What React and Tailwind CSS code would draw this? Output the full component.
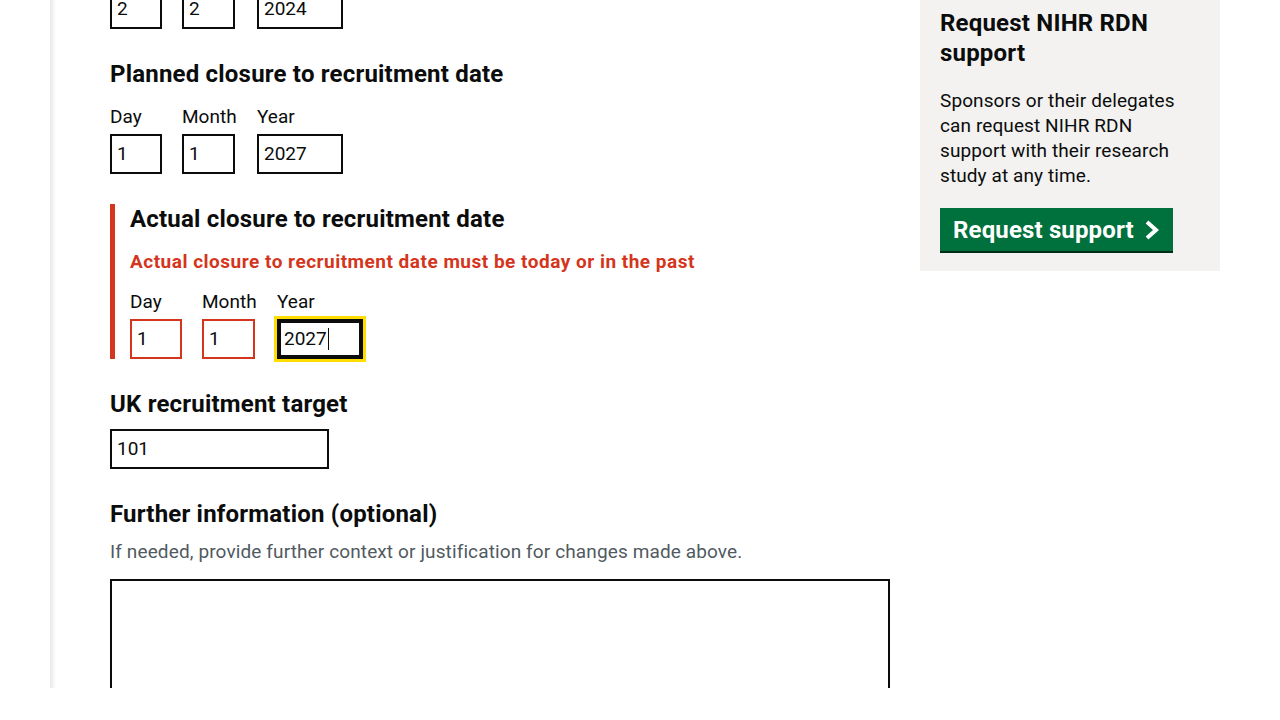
import React from 'react';

function Box({ value, w, error, focused }) {
  // date / text field, drawn as a box so the caret shows
  const border = error ? 'border-[#d4351c]' : 'border-[#0b0c0c]';
  return (
    <div
      className={`h-10 shrink-0 border-2 ${border} bg-white px-[5px] flex items-center text-[19px] text-[#0b0c0c] ${
        focused ? 'outline-solid outline-[3px] outline-[#ffdd00] shadow-[inset_0_0_0_2px_#0b0c0c]' : ''
      }`}
      style={{ width: w }}
    >
      <span>{value}</span>
      {focused && <span className="w-px h-[22px] bg-[#0b0c0c] ml-px" />}
    </div>
  );
}

function DateFields({ values, error, focusYear, noLabels }) {
  const cols = [
    { label: 'Day', col: 'w-[52px]', w: 52, err: error },
    { label: 'Month', col: 'w-[55px]', w: 53, err: error },
    { label: 'Year', col: 'w-[86px]', w: 86, err: false },
  ];
  return (
    <div className="flex gap-5">
      {cols.map((c, i) => (
        <div key={c.label} className={`flex flex-col ${c.col}`}>
          {!noLabels && <span className="text-[19px] leading-[25px] mb-[5px]">{c.label}</span>}
          <Box value={values[i]} w={c.w} error={c.err} focused={focusYear && i === 2} />
        </div>
      ))}
    </div>
  );
}

export default function App() {
  return (
    <div className="h-[720px] bg-white overflow-hidden text-[#0b0c0c] font-['Roboto','Liberation_Sans',sans-serif]">
      <div className="h-[688px] flex overflow-hidden">
        <div className="w-[50px] shrink-0" />
        <div className="w-[6px] shrink-0 bg-gradient-to-r from-[#e8e8e8] to-white" />
        <div className="flex items-start gap-[30px] pl-[54px] -mt-3">
          {/* Form column */}
          <div className="w-[780px] shrink-0 mt-px">
            <DateFields values={['2', '2', '2024']} noLabels />

            <h2 className="mt-[30px] text-[24px] leading-[30px] font-bold tracking-[0.2px] mb-[15px]">
              Planned closure to recruitment date
            </h2>
            <DateFields values={['1', '1', '2027']} />

            {/* Error group */}
            <div className="mt-[30px] border-l-[5px] border-[#d4351c] pl-[15px]">
              <h2 className="text-[24px] leading-[30px] font-bold tracking-[0.2px] mb-[15px]">
                Actual closure to recruitment date
              </h2>
              <p className="text-[19px] leading-[25px] font-bold tracking-[0.5px] text-[#d4351c] mb-[15px]">
                Actual closure to recruitment date must be today or in the past
              </p>
              <DateFields values={['1', '1', '2027']} error focusYear />
            </div>

            <h2 className="mt-[30px] text-[24px] leading-[30px] font-bold tracking-[0.2px] mb-[10px]">
              UK recruitment target
            </h2>
            <Box value="101" w={219} />

            <h2 className="mt-[30px] text-[24px] leading-[30px] font-bold tracking-[0.2px] mb-[10px]">
              Further information (optional)
            </h2>
            <p className="text-[19px] leading-[25px] tracking-[0.12px] text-[#505a5f] mb-[15px]">
              If needed, provide further context or justification for changes made above.
            </p>
            <div className="w-[780px] h-[160px] border-2 border-[#0b0c0c]" />
          </div>

          {/* Sidebar */}
          <div className="w-[300px] shrink-0 bg-[#f3f2f1] pt-5 px-5 pb-[18px]">
            <h2 className="text-[24px] leading-[30px] font-bold tracking-[0.2px]">Request NIHR RDN support</h2>
            <p className="mt-5 text-[19px] leading-[25px] tracking-[0.1px]">
              Sponsors or their delegates can request NIHR RDN support with their research study at any time.
            </p>
            <button className="mt-5 h-[43px] w-[233px] bg-[#00703c] shadow-[0_2px_0_#002d18] text-white text-[24px] font-bold tracking-[0.15px] flex items-center pl-[13px] mb-[2px]">
              <span>Request support</span>
              <svg width="18" height="20" viewBox="0 0 18 20" className="ml-auto mr-3">
                <path d="M4 2 L13 10 L4 18" fill="none" stroke="white" strokeWidth="4" />
              </svg>
            </button>
          </div>
        </div>
      </div>
    </div>
  );
}
